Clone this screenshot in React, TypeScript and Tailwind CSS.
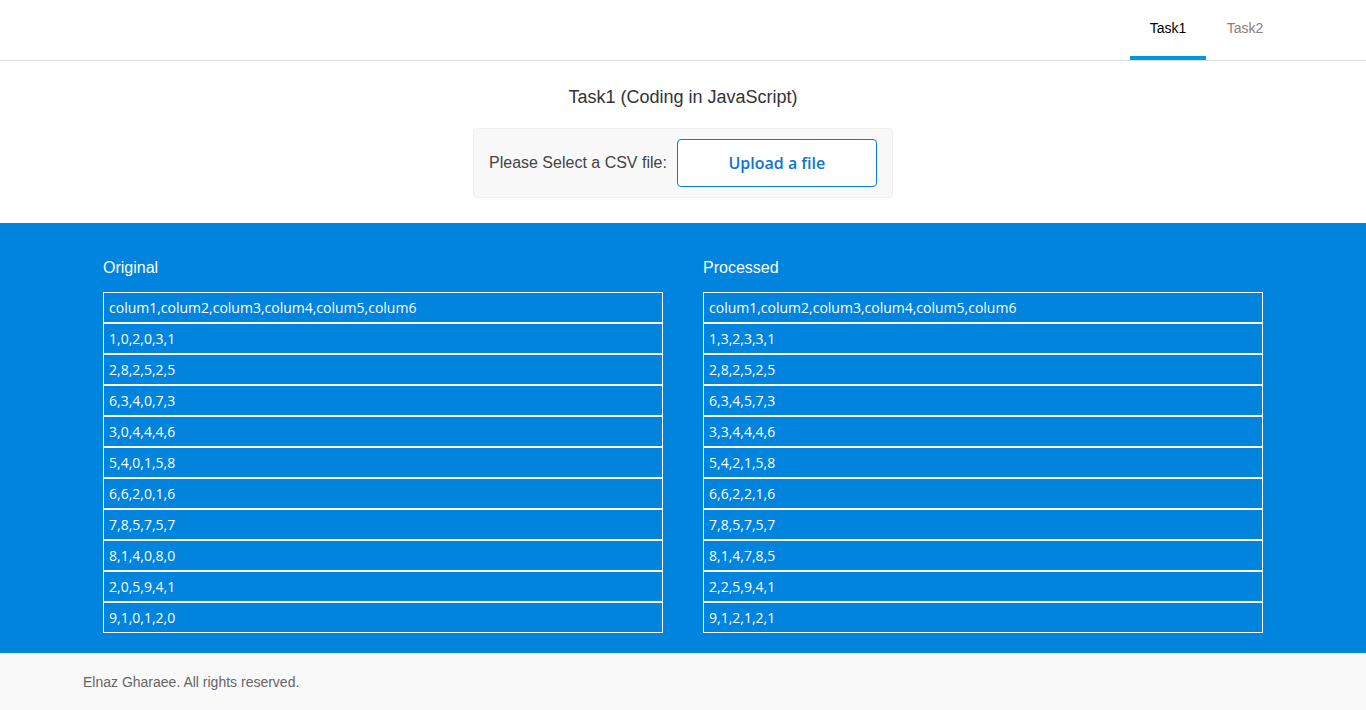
const original: string[] = [
  "colum1,colum2,colum3,colum4,colum5,colum6",
  "1,0,2,0,3,1",
  "2,8,2,5,2,5",
  "6,3,4,0,7,3",
  "3,0,4,4,4,6",
  "5,4,0,1,5,8",
  "6,6,2,0,1,6",
  "7,8,5,7,5,7",
  "8,1,4,0,8,0",
  "2,0,5,9,4,1",
  "9,1,0,1,2,0",
];

const processed: string[] = [
  "colum1,colum2,colum3,colum4,colum5,colum6",
  "1,3,2,3,3,1",
  "2,8,2,5,2,5",
  "6,3,4,5,7,3",
  "3,3,4,4,4,6",
  "5,4,2,1,5,8",
  "6,6,2,2,1,6",
  "7,8,5,7,5,7",
  "8,1,4,7,8,5",
  "2,2,5,9,4,1",
  "9,1,2,1,2,1",
];

interface TableProps {
  title: string;
  rows: string[];
}

const CsvTable = ({ title, rows }: TableProps): JSX.Element => {
  return (
    <div className="w-[560px]">
      <h3 className="text-white text-[16px] leading-[20px]">{title}</h3>
      <div className="mt-[14px]">
        {rows.map((row, i) => (
          <div
            key={i}
            className="h-[31px] border border-white flex items-center pl-[5px] text-white text-[14px] font-['Open_Sans',sans-serif]"
          >
            {row}
          </div>
        ))}
      </div>
    </div>
  );
};

const App = (): JSX.Element => {
  return (
    <div className="min-h-[710px] flex flex-col font-['Liberation_Sans',Arial,sans-serif] bg-white">
      <header className="h-[61px] border-b border-[#dddddd] flex justify-end pr-[82px]">
        <nav className="flex h-full">
          <a className="w-[76px] h-full flex items-center justify-center text-[14px] text-black border-b-4 border-[#0096db] pt-[1px]">
            Task1
          </a>
          <a className="w-[78px] h-full flex items-center justify-center text-[14px] text-[#8a7f7a] border-b-4 border-transparent pt-[1px]">
            Task2
          </a>
        </nav>
      </header>

      <section className="flex flex-col items-center pt-[26px] pb-[25px]">
        <h2 className="text-[18px] text-[#333333] leading-[20px]">
          Task1 (Coding in JavaScript)
        </h2>
        <div className="mt-[21px] w-[420px] h-[70px] bg-[#f8f8f8] rounded-[4px] border border-[#f0f0f0] flex items-center pl-[15px]">
          <span className="text-[16px] text-[#444444]">Please Select a CSV file:</span>
          <button className="ml-[10px] w-[200px] h-[48px] border border-[#0b7ad6] rounded-[4px] bg-white text-[#0b75d0] text-[16px] font-semibold font-['Open_Sans',sans-serif]">
            Upload a file
          </button>
        </div>
      </section>

      <main className="bg-[#0084dd] h-[430px] flex justify-center gap-[40px] pt-[35px]">
        <CsvTable title="Original" rows={original} />
        <CsvTable title="Processed" rows={processed} />
      </main>

      <footer className="bg-[#f9f9f9] h-[57px] flex items-center pl-[83px] pt-[2px] flex-1">
        <p className="text-[14px] text-[#666666]">Elnaz Gharaee. All rights reserved.</p>
      </footer>
    </div>
  );
};

export default App;
